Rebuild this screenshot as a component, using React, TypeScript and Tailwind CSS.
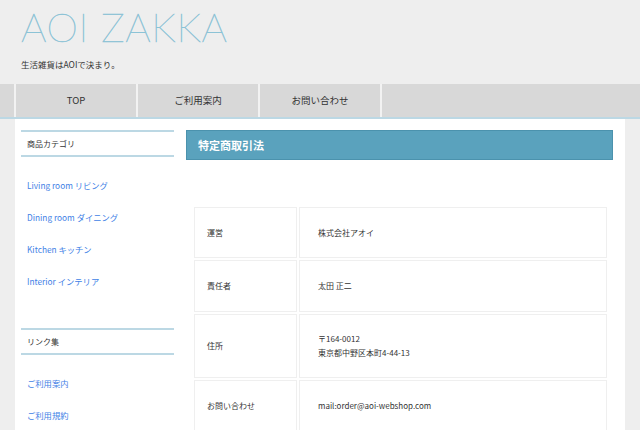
import React from "react";

const jp = { fontFamily: '"Noto Sans CJK JP", "Noto Sans", sans-serif' };

function SideHeading({ children }: { children: React.ReactNode }) {
  return (
    <div className="border-y-2 border-[#bcd8e4] h-[27px] flex items-center pl-[6px] text-[8px] text-[#333]">
      {children}
    </div>
  );
}

function SideLink({ children }: { children: React.ReactNode }) {
  return <div className="h-[32px] flex items-center pl-[6px] text-[8.3px] text-[#3f7fe6]">{children}</div>;
}

const rows: { label: string; value: React.ReactNode; h: string }[] = [
  { label: "運営", value: "株式会社アオイ", h: "h-[51px]" },
  { label: "責任者", value: "太田 正二", h: "h-[52px]" },
  {
    label: "住所",
    value: (
      <>
        〒164-0012
        <br />
        東京都中野区本町4-44-13
      </>
    ),
    h: "h-[64px]",
  },
  { label: "お問い合わせ", value: "mail:order@aoi-webshop.com", h: "h-[52px]" },
];

export default function App() {
  return (
    <div className="w-[640px] h-[430px] overflow-hidden bg-[#eeeeee]" style={jp}>
      <header className="h-[84px] pl-[21px] pt-[6px]">
        <div
          className="text-[40px] leading-[42px] tracking-[0.6px] text-[#7fbad0] [-webkit-text-stroke:0.45px_#8cc3d6]"
          style={{ fontFamily: '"Lato", "Inter", sans-serif', fontWeight: 100 }}
        >
          AOI ZAKKA
        </div>
        <div className="mt-[10px] text-[8.5px] text-[#333]">生活雑貨はAOIで決まり。</div>
      </header>
      <nav className="h-[35px] bg-[#d8d8d8] border-b-2 border-[#bcd8e4] flex">
        <div className="w-[14px]" />
        <div className="w-[2px] bg-[#f2f2f2]" />
        {["TOP", "ご利用案内", "お問い合わせ"].map((t) => (
          <React.Fragment key={t}>
            <div className="w-[120px] flex items-center justify-center text-[9.5px] text-[#333]">{t}</div>
            <div className="w-[2px] bg-[#f2f2f2]" />
          </React.Fragment>
        ))}
      </nav>
      <main className="mx-[15px] bg-white flex h-[311px]">
        <aside className="w-[171px] pl-[6px] pr-[12px] pt-[11px]">
          <SideHeading>商品カテゴリ</SideHeading>
          <div className="pt-[12px]">
            <SideLink>Living room リビング</SideLink>
            <SideLink>Dining room ダイニング</SideLink>
            <SideLink>Kitchen キッチン</SideLink>
            <SideLink>Interior インテリア</SideLink>
          </div>
          <div className="mt-[31px]">
            <SideHeading>リンク集</SideHeading>
          </div>
          <div className="pt-[12px]">
            <SideLink>ご利用案内</SideLink>
            <SideLink>ご利用規約</SideLink>
          </div>
        </aside>
        <section className="w-[427px] pt-[11px]">
          <div className="h-[30px] bg-[#5aa2bd] border border-[#4b92ad] flex items-center pl-[11px] text-[11px] font-bold text-white">
            特定商取引法
          </div>
          <table className="mt-[45px] ml-[6px] border-separate border-spacing-[2px] text-[8px] text-[#333]">
            <tbody>
              {rows.map((r) => (
                <tr key={r.label} className={r.h}>
                  <td className="w-[103px] border border-[#efefef] pl-[12px] align-middle">{r.label}</td>
                  <td className="w-[308px] border border-[#efefef] pl-[18px] align-middle leading-[14px]">{r.value}</td>
                </tr>
              ))}
            </tbody>
          </table>
        </section>
      </main>
    </div>
  );
}
